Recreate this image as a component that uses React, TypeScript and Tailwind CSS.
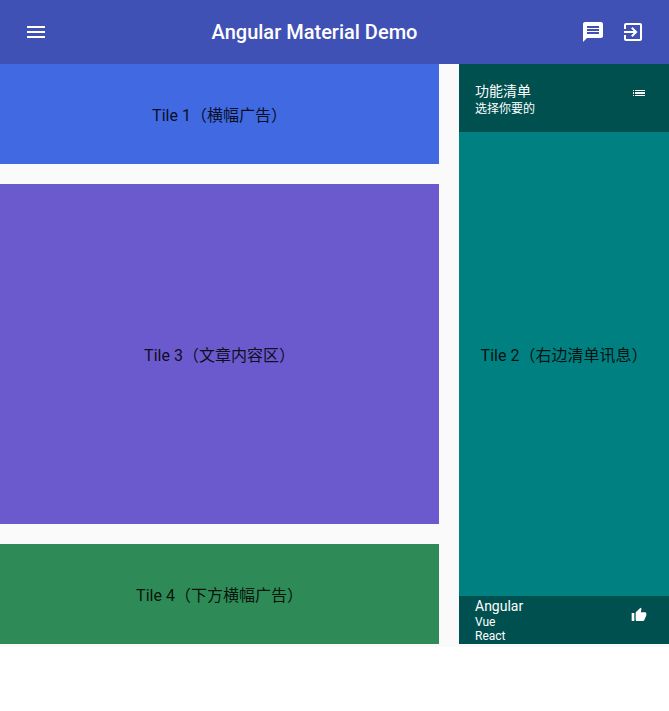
import React from "react";
import { MdMenu, MdMessage, MdExitToApp, MdThumbUp } from "react-icons/md";

function Tile({ className, children }: { className: string; children: React.ReactNode }) {
  return <section className={`flex items-center justify-center whitespace-nowrap ${className}`}>{children}</section>;
}

function ListIcon({ className }: { className: string }) {
  return (
    <svg width="16" height="16" viewBox="0 0 16 16" fill="currentColor" shapeRendering="crispEdges" className={className}>
      <path d="M2 5h1v1H2zM4 5h10v1H4zM2 7h1v2H2zM4 7h10v2H4zM2 10h1v1H2zM4 10h10v1H4z" />
    </svg>
  );
}

export default function App() {
  return (
    <div className="min-h-[711px] bg-white font-[Roboto,'Noto_Sans_CJK_SC',sans-serif] text-base text-black/87">
      <header className="flex h-16 items-center bg-[#3f51b5] px-6 text-white">
        <MdMenu size={24} />
        <h1 className="flex-1 text-center text-xl font-medium">Angular Material Demo</h1>
        <div className="flex gap-4">
          <MdMessage size={24} />
          <MdExitToApp size={24} />
        </div>
      </header>
      <main className="flex h-[583px] items-start gap-5 bg-[#fafafa]">
        <div className="flex w-[439px] flex-col gap-5">
          <Tile className="h-[100px] bg-[#4169e1] pt-1">Tile 1（横幅广告）</Tile>
          <Tile className="h-[340px] bg-[#6a5acd] pt-1">Tile 3（文章内容区）</Tile>
          <Tile className="h-[100px] bg-[#2e8b57] pt-1">Tile 4（下方横幅广告）</Tile>
        </div>
        <aside className="flex h-[580px] w-[210px] flex-col bg-[#008080]">
          <div className="flex h-[68px] items-center justify-between bg-[#005050] px-4 text-white">
            <div className="pt-[5px]">
              <h3 className="text-sm leading-[17px]">功能清单</h3>
              <p className="text-xs leading-[19px]">选择你要的</p>
            </div>
            <ListIcon className="mr-1.5 mb-2.5" />
          </div>
          <Tile className="flex-1 pb-4">Tile 2（右边清单讯息）</Tile>
          <div className="flex h-12 items-center justify-between bg-[#005050] px-4 text-white">
            <div>
              <h3 className="text-sm leading-[18px]">Angular</h3>
              <p className="text-xs leading-[14px]">Vue</p>
              <p className="text-xs leading-[14px]">React</p>
            </div>
            <MdThumbUp size={16} className="mr-1.5 mb-2.5" />
          </div>
        </aside>
      </main>
    </div>
  );
}
